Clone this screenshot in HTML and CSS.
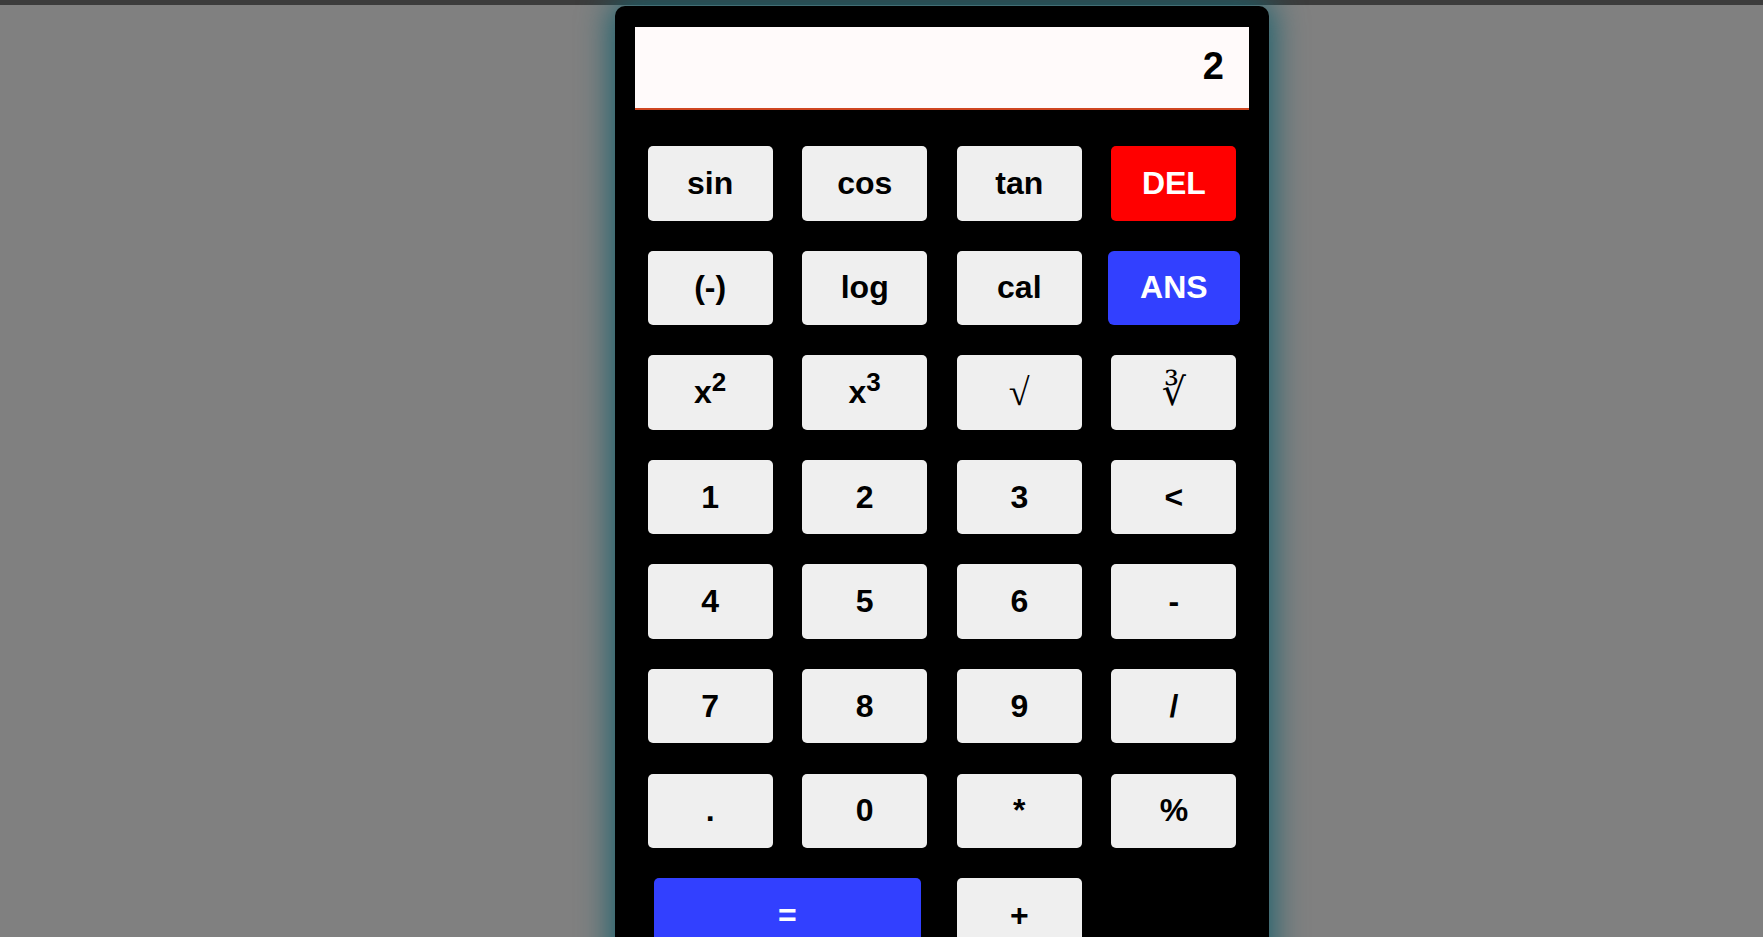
FILE: index.html
```html
<!DOCTYPE html>
<html lang="en">
<head>
<meta charset="utf-8">
<title>Calculator</title>
<link rel="stylesheet" href="styles.css">
</head>
<body>
<div class="topbar"></div>
<div class="calculator">
  <div class="display">2</div>
  <div class="keys">
    <button class="key">sin</button>
    <button class="key">cos</button>
    <button class="key">tan</button>
    <button class="key key-del">DEL</button>

    <button class="key">(-)</button>
    <button class="key">log</button>
    <button class="key">cal</button>
    <button class="key key-ans">ANS</button>

    <button class="key">x<sup>2</sup></button>
    <button class="key">x<sup>3</sup></button>
    <button class="key key-root">&#8730;</button>
    <button class="key key-root">&#8731;</button>

    <button class="key">1</button>
    <button class="key">2</button>
    <button class="key">3</button>
    <button class="key">&lt;</button>

    <button class="key">4</button>
    <button class="key">5</button>
    <button class="key">6</button>
    <button class="key">-</button>

    <button class="key">7</button>
    <button class="key">8</button>
    <button class="key">9</button>
    <button class="key">/</button>

    <button class="key">.</button>
    <button class="key">0</button>
    <button class="key">*</button>
    <button class="key">%</button>

    <button class="key key-equals">=</button>
    <button class="key">+</button>
  </div>
</div>
</body>
</html>
```

FILE: styles.css
```css
html, body {
  margin: 0;
  padding: 0;
  height: 100%;
  overflow: hidden;
}

body {
  background: #808080;
  font-family: "Liberation Sans", Arial, sans-serif;
}

.topbar {
  height: 5px;
  background: #3c3c3c;
}

.calculator {
  width: 654px;
  margin: 1px 0 0 615px;
  padding: 21px 0 30px;
  background: #000;
  border-radius: 10px;
  box-shadow: 0 0 32px 4px #17606c;
}

.display {
  margin: 0 20px;
  height: 81px;
  line-height: 78px;
  padding-right: 25px;
  background: #fffafa;
  border-bottom: 2px solid #cf4520;
  text-align: right;
  font-size: 38px;
  font-weight: bold;
  color: #000;
}

.keys {
  display: grid;
  grid-template-columns: repeat(4, 125px);
  grid-auto-rows: 74.5px;
  gap: 30.1px 29.6px;
  justify-content: center;
  margin-top: 36px;
}

.key {
  border: none;
  border-radius: 5px;
  background: #efefef;
  color: #000;
  font-family: "Liberation Sans", Arial, sans-serif;
  font-size: 32px;
  font-weight: bold;
  padding: 0;
  margin: 0;
  cursor: pointer;
}

.key sup {
  font-size: 26px;
  line-height: 0;
}

.key-del {
  background: #ff0000;
  color: #fff;
}

.key-ans {
  background: #3240ff;
  color: #fff;
  margin: 0 -3.5px;
  border-radius: 6px;
}

.key-equals {
  grid-column: 1 / span 2;
  margin: 0 6px;
  background: #3240ff;
  color: #fff;
}

.key-root {
  font-family: "Liberation Serif", "DejaVu Serif", serif;
  font-weight: normal;
  font-size: 38px;
}
```
